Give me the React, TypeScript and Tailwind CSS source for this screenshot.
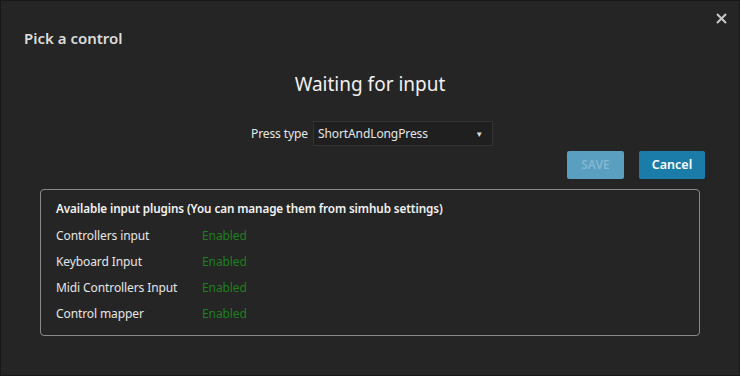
import React from "react";

const PLUGINS = [
  "Controllers input",
  "Keyboard Input",
  "Midi Controllers Input",
  "Control mapper",
];

function CloseIcon() {
  return (
    <svg width="11" height="11" viewBox="0 0 11 11" className="text-[#c8c8c8]">
      <path d="M1 1L10 10M10 1L1 10" stroke="currentColor" strokeWidth="2" />
    </svg>
  );
}

export default function App() {
  return (
    <div
      className="relative w-[740px] h-[376px] bg-[#252525] border border-[#181818] text-[#e6e6e6] overflow-hidden"
      style={{ fontFamily: "'Noto Sans', 'Open Sans', sans-serif" }}
    >
      <button className="absolute right-[12px] top-[12px]">
        <CloseIcon />
      </button>

      <div className="pl-[23px] pt-[27px] text-[15px] leading-[20px] font-semibold text-[#dcdcdc]">
        Pick a control
      </div>

      <div className="mt-[22px] text-center text-[19px] leading-[28px] text-[#f0f0f0]">
        Waiting for input
      </div>

      <div className="mt-[23px] flex items-center justify-center gap-[5px] pl-[4px]">
        <span className="text-[12px] tracking-[-0.1px] text-[#e6e6e6]">Press type</span>
        <div className="flex h-[25px] w-[180px] items-center justify-between border border-[#333333] bg-[#1f1f1f] pl-[4px] pr-[9px] text-[12px] tracking-[-0.1px]">
          <span>ShortAndLongPress</span>
          <span className="text-[8px] text-[#dddddd]">▼</span>
        </div>
      </div>

      <div className="mt-[5px] flex justify-end gap-[15px] pr-[34px]">
        <button className="h-[28px] w-[57px] rounded-[2px] bg-[#5a9ec0] text-[12px] font-semibold text-[#85b7d0]">
          SAVE
        </button>
        <button className="h-[28px] w-[66px] rounded-[2px] bg-[#1b7ca9] text-[12.5px] font-semibold text-white">
          Cancel
        </button>
      </div>

      <div className="mx-[39px] mt-[10px] h-[147px] rounded-[4px] border border-[#8a8a8a] pl-[15px] pt-[8px]">
        <div className="text-[11.7px] leading-[20px] font-semibold tracking-[-0.1px] text-[#f2f2f2]">
          Available input plugins (You can manage them from simhub settings)
        </div>
        <div className="mt-[5px] flex flex-col">
          {PLUGINS.map((name) => (
            <div key={name} className="flex h-[26px] items-center text-[12px] tracking-[-0.1px]">
              <span className="w-[146px] text-[#e6e6e6]">{name}</span>
              <span className="text-[#1d7f1d]">Enabled</span>
            </div>
          ))}
        </div>
      </div>
    </div>
  );
}
